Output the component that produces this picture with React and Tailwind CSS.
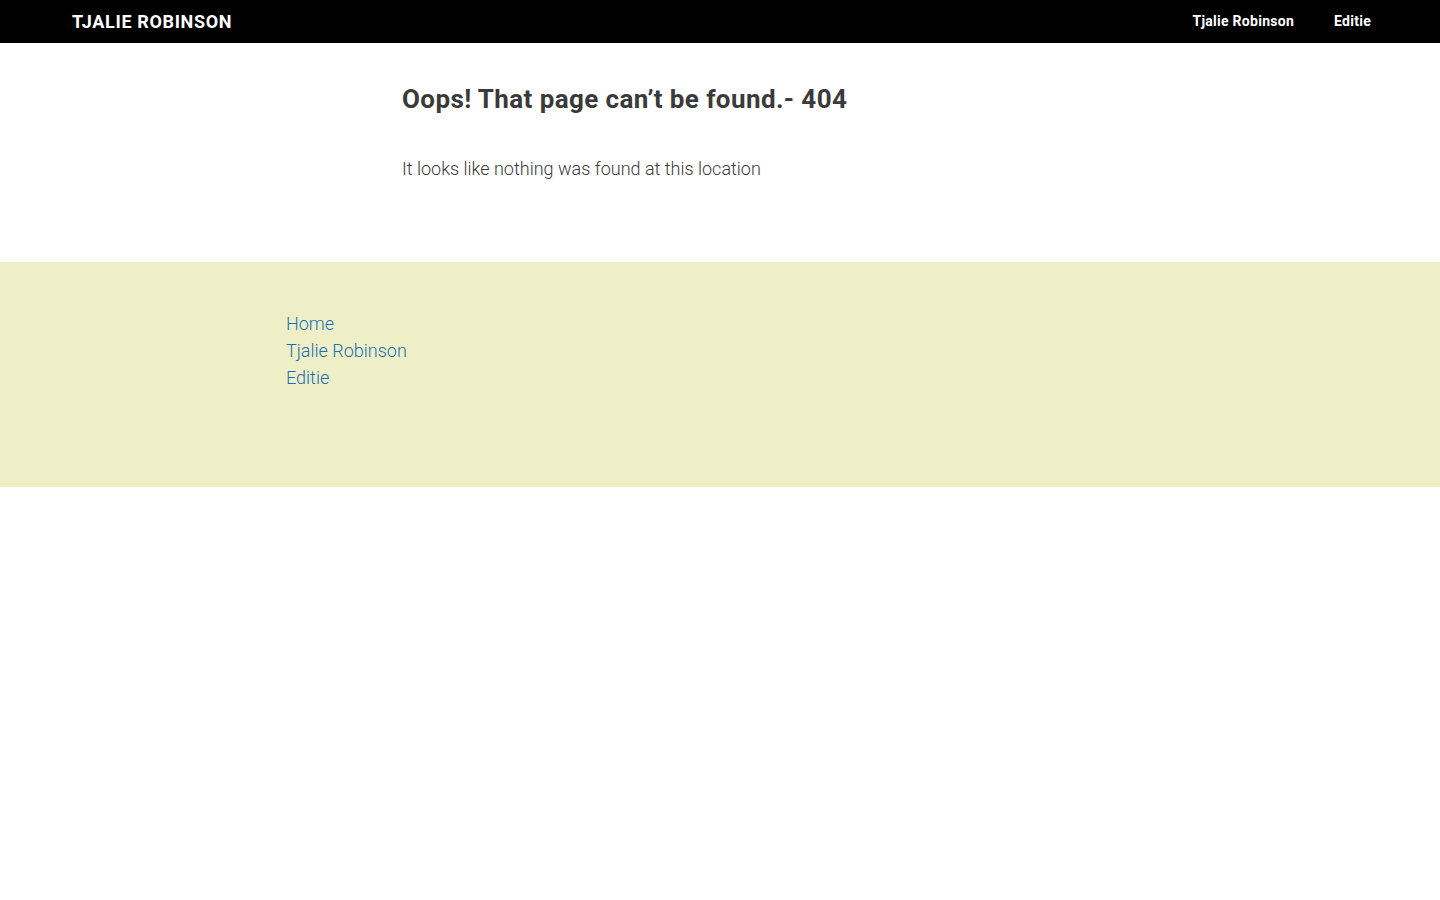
import React from 'react';

const App = () => {
  return (
    <div className="min-h-screen bg-white" style={{ fontFamily: 'Roboto, "Liberation Sans", sans-serif' }}>
      <header className="h-[43px] bg-black flex items-center justify-between pl-[72px] pr-[69px]">
        <a href="#" className="text-white text-[18px] font-bold uppercase tracking-[0.65px]">Tjalie Robinson</a>
        <nav className="flex items-center gap-10">
          <a href="#" className="text-white text-[14px] font-bold tracking-[0.27px]">Tjalie Robinson</a>
          <a href="#" className="text-white text-[14px] font-bold tracking-[0.27px]">Editie</a>
        </nav>
      </header>

      <main className="pl-[402px] pt-[38px] pb-[80px]">
        <h1 className="text-[26px] font-bold text-[#3a3a3a] leading-[36px] tracking-[0.4px]">Oops! That page can’t be found.- 404</h1>
        <p className="mt-[38px] text-[18px] font-light text-[#3a3a3a] leading-[27px]">It looks like nothing was found at this location</p>
      </main>

      <footer className="bg-[#eeefc6] h-[225px] pl-[286px] pt-[48px]">
        <ul className="flex flex-col">
          <li><a href="#" className="text-[18px] font-light text-[#1a6fb5] leading-[27px]">Home</a></li>
          <li><a href="#" className="text-[18px] font-light text-[#1a6fb5] leading-[27px]">Tjalie Robinson</a></li>
          <li><a href="#" className="text-[18px] font-light text-[#1a6fb5] leading-[27px]">Editie</a></li>
        </ul>
      </footer>
    </div>
  );
};

export default App;
